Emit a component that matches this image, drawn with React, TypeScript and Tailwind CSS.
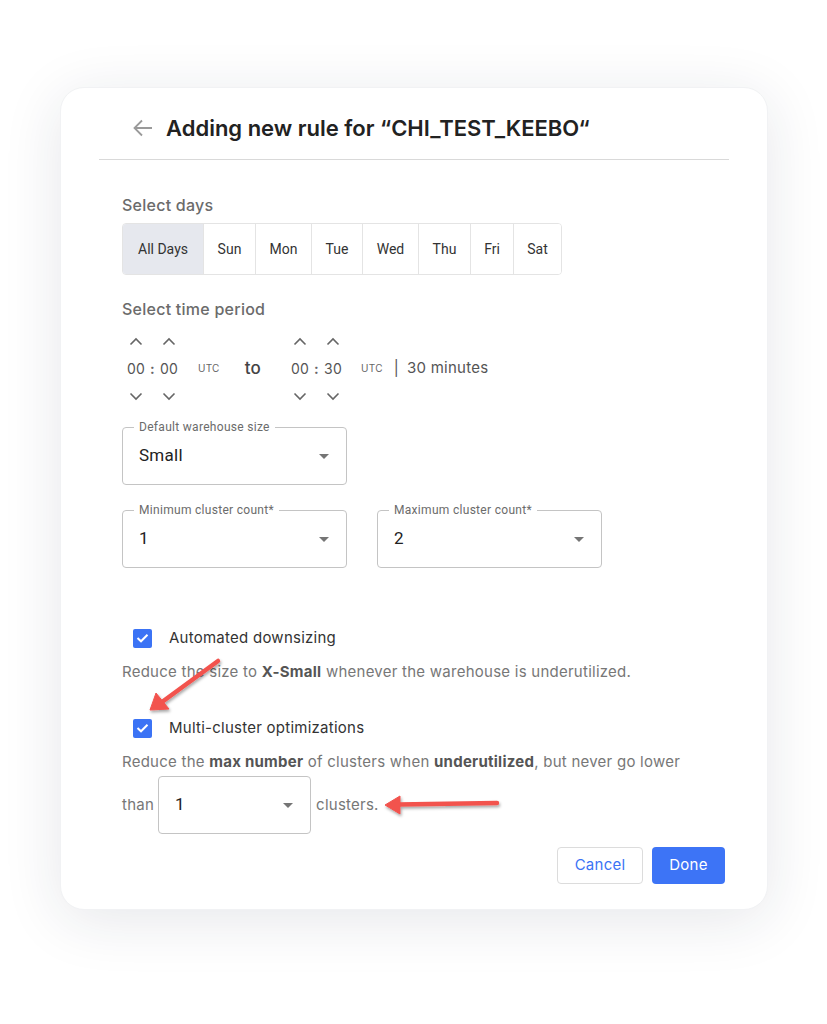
import React from 'react';

const SANS = "font-['Inter','Noto_Sans',sans-serif]";
const ROBOTO = "font-['Roboto','Liberation_Sans',sans-serif]";

const days = ['All Days', 'Sun', 'Mon', 'Tue', 'Wed', 'Thu', 'Fri', 'Sat'];
const dayWidths = ['w-[80px]', 'w-[52px]', 'w-[56px]', 'w-[51px]', 'w-[56px]', 'w-[52px]', 'w-[43px]', 'w-[48px]'];

function ChevronUp() {
  return (
    <svg width="14" height="9" viewBox="0 0 14 9" fill="none">
      <path d="M1.5 7.5 L7 2 L12.5 7.5" stroke="#666" strokeWidth="1.6" />
    </svg>
  );
}

function ChevronDown() {
  return (
    <svg width="14" height="9" viewBox="0 0 14 9" fill="none">
      <path d="M1.5 1.5 L7 7 L12.5 1.5" stroke="#666" strokeWidth="1.6" />
    </svg>
  );
}

function Caret() {
  return (
    <svg width="10" height="5" viewBox="0 0 10 5">
      <path d="M0 0 L10 0 L5 5 Z" fill="#757575" />
    </svg>
  );
}

function Select({ label, value, width }: { label?: string; value: string; width: string }) {
  return (
    <div className={`relative h-[58px] ${width} rounded-[4px] border border-[#c4c4c4] flex items-center pl-[16px] pr-[17px] justify-between ${ROBOTO}`}>
      {label && (
        <span className="absolute -top-[9px] left-[11px] bg-white px-[5px] text-[12px] leading-[16px] text-[#6b6b6b] tracking-[0.3px]">
          {label}
        </span>
      )}
      <span className="text-[17px] text-[#222]">{value}</span>
      <Caret />
    </div>
  );
}

function TimeBox({ h, m }: { h: string; m: string }) {
  return (
    <div className="grid grid-cols-[18px_15px_18px] grid-rows-[28px_27px_28px] text-[14px] text-[#555] tracking-[0.3px]">
      <div className="flex justify-center items-center"><ChevronUp /></div>
      <div />
      <div className="flex justify-center items-center"><ChevronUp /></div>
      <div className="flex items-center justify-center">{h}</div>
      <div className="flex items-center justify-center font-bold text-[#666]">:</div>
      <div className="flex items-center justify-center">{m}</div>
      <div className="flex justify-center items-center"><ChevronDown /></div>
      <div />
      <div className="flex justify-center items-center"><ChevronDown /></div>
    </div>
  );
}

function Check() {
  return (
    <div className="w-[19px] h-[19px] rounded-[2px] bg-[#3b73f5] flex items-center justify-center">
      <svg width="13" height="10" viewBox="0 0 13 10" fill="none">
        <path d="M1.5 5 L5 8.3 L11.5 1.7" stroke="white" strokeWidth="2" />
      </svg>
    </div>
  );
}

export default function App() {
  return (
    <div className={`relative min-h-screen bg-white pt-[87px] pl-[60px] ${SANS}`}>
      <div className="w-[708px] h-[823px] rounded-[24px] bg-white shadow-[0_10px_60px_rgba(30,40,60,0.11)] border border-[#f1f2f4]">
        {/* header */}
        <div className="mx-[38px] pt-[26px] pb-[17px] border-b border-[#d9d9d9] flex items-center pl-[34px]">
          <svg width="20" height="18" viewBox="0 0 20 18" fill="none" className="mr-[13px]">
            <path d="M19 9 H2 M9 1.5 L1.5 9 L9 16.5" stroke="#9a9a9a" strokeWidth="1.8" />
          </svg>
          <h2 className="text-[22px] leading-[28px] font-semibold text-[#222]">
            Adding new rule for “CHI_TEST_KEEBO“
          </h2>
        </div>

        <div className="px-[61px] tracking-[0.25px]">
          <div className="mt-[33px] text-[16px] leading-[24px] font-medium text-[#6b6b6b]">Select days</div>
          <div className={`mt-[6px] flex h-[52px] w-fit border border-[#e4e4e4] rounded-[4px] overflow-hidden tracking-normal ${ROBOTO}`}>
            {days.map((d, i) => (
              <div
                key={d}
                className={`${dayWidths[i]} flex items-center justify-center text-[14px] text-[#333] ${i === 0 ? 'bg-[#e6e8ee]' : 'bg-white border-l border-[#e4e4e4]'}`}
              >
                {d}
              </div>
            ))}
          </div>

          <div className="mt-[22px] text-[16px] leading-[24px] font-medium text-[#6b6b6b]">Select time period</div>
          <div className="mt-[6px] flex items-center pl-[5px]">
            <TimeBox h="00" m="00" />
            <span className="ml-[20px] text-[10px] text-[#666]">UTC</span>
            <span className="ml-[25px] text-[17px] font-medium text-[#444]">to</span>
            <div className="ml-[30px]">
              <TimeBox h="00" m="30" />
            </div>
            <span className="ml-[19px] text-[10px] text-[#666]">UTC</span>
            <span className="ml-[11px] text-[15px] text-[#555]">|</span>
            <span className="ml-[8px] text-[15px] text-[#555]">30 minutes</span>
          </div>

          <div className="mt-[17px]">
            <Select label="Default warehouse size" value="Small" width="w-[225px]" />
          </div>
          <div className="mt-[25px] flex gap-[30px]">
            <Select label="Minimum cluster count*" value="1" width="w-[225px]" />
            <Select label="Maximum cluster count*" value="2" width="w-[225px]" />
          </div>

          <div className="mt-[51px] h-[38px] flex items-center pl-[11px] gap-[17px]">
            <Check />
            <span className="text-[15px] text-[#333]">Automated downsizing</span>
          </div>
          <p className="mt-[4px] text-[15px] leading-[22px] text-[#777]">
            Reduce the size to <b className="text-[#555]">X-Small</b> whenever the warehouse is underutilized.
          </p>

          <div className="mt-[26px] h-[38px] flex items-center pl-[11px] gap-[17px]">
            <Check />
            <span className="text-[15px] text-[#333]">Multi-cluster optimizations</span>
          </div>
          <p className="mt-[4px] text-[15px] leading-[22px] text-[#777]">
            Reduce the <b className="text-[#555]">max number</b> of clusters when <b className="text-[#555]">underutilized</b>, but never go lower
          </p>
          <div className="mt-[3px] flex items-center text-[15px] text-[#777]">
            <span className="mr-[4px]">than</span>
            <Select value="1" width="w-[153px]" />
            <span className="ml-[5px]">clusters.</span>
          </div>

          <div className="mt-[13px] flex justify-end gap-[9px] mr-[-19px]">
            <button className="h-[37px] w-[86px] rounded-[4px] border border-[#dcdcdc] bg-white text-[15px] text-[#3b73f5]">
              Cancel
            </button>
            <button className="h-[37px] w-[73px] rounded-[4px] bg-[#3d74f6] text-[15px] text-white">
              Done
            </button>
          </div>
        </div>
      </div>

      {/* annotation arrows */}
      <svg className="absolute left-0 top-0 pointer-events-none" width="827" height="1024" viewBox="0 0 827 1024">
        <defs>
          <filter id="sh" x="-20%" y="-20%" width="140%" height="140%">
            <feDropShadow dx="1" dy="2" stdDeviation="1.5" floodColor="#000" floodOpacity="0.35" />
          </filter>
        </defs>
        <g filter="url(#sh)" fill="#f2534e" stroke="#f2534e">
          <line x1="218" y1="661" x2="162" y2="702" strokeWidth="4.5" strokeLinecap="round" />
          <path d="M150 710 L156 693 L169 709 Z" strokeWidth="1" strokeLinejoin="round" />
          <line x1="497" y1="803" x2="398" y2="804.5" strokeWidth="4.5" strokeLinecap="round" />
          <path d="M385 805 L400 796 L400 814 Z" strokeWidth="1" strokeLinejoin="round" />
        </g>
      </svg>
    </div>
  );
}
